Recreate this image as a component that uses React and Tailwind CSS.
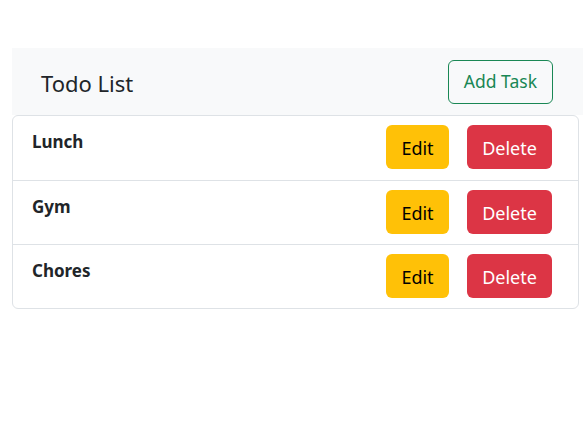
export default function App() {
  const items = ["Lunch", "Gym", "Chores"];
  return (
    <div className="w-[583px] h-[426px] bg-white pt-[48px] pl-[12px]" style={{ fontFamily: '"Noto Sans", "Open Sans", sans-serif' }}>
      <div className="bg-[#f8f9fa] h-[67px] flex items-center justify-between pl-[29px] pr-[30px]">
        <div className="text-[22px] text-[#212529] leading-none pt-[3px]">Todo List</div>
        <button className="h-[44px] px-[15px] border border-[#198754] rounded-[6px] text-[#198754] text-[17.5px] bg-transparent">Add Task</button>
      </div>
      <div className="mr-[4px] border border-[#dee2e6] rounded-[6px] bg-white">
        {items.map((t, i) => (
          <div key={t} className={`h-[64px] flex items-start justify-between pl-[19px] pr-[26px] pt-[9px] ${i > 0 ? "border-t border-[#dee2e6]" : ""}`}>
            <div className="font-bold text-[17px] text-[#212529] pt-[4px]">{t}</div>
            <div className="flex gap-[18px]">
              <button className="h-[44px] w-[63px] rounded-[6px] bg-[#ffc107] text-[#000] text-[18px] pt-[2px]">Edit</button>
              <button className="h-[44px] w-[85px] rounded-[6px] bg-[#dc3545] text-white text-[18px] pt-[2px]">Delete</button>
            </div>
          </div>
        ))}
      </div>
    </div>
  );
}
